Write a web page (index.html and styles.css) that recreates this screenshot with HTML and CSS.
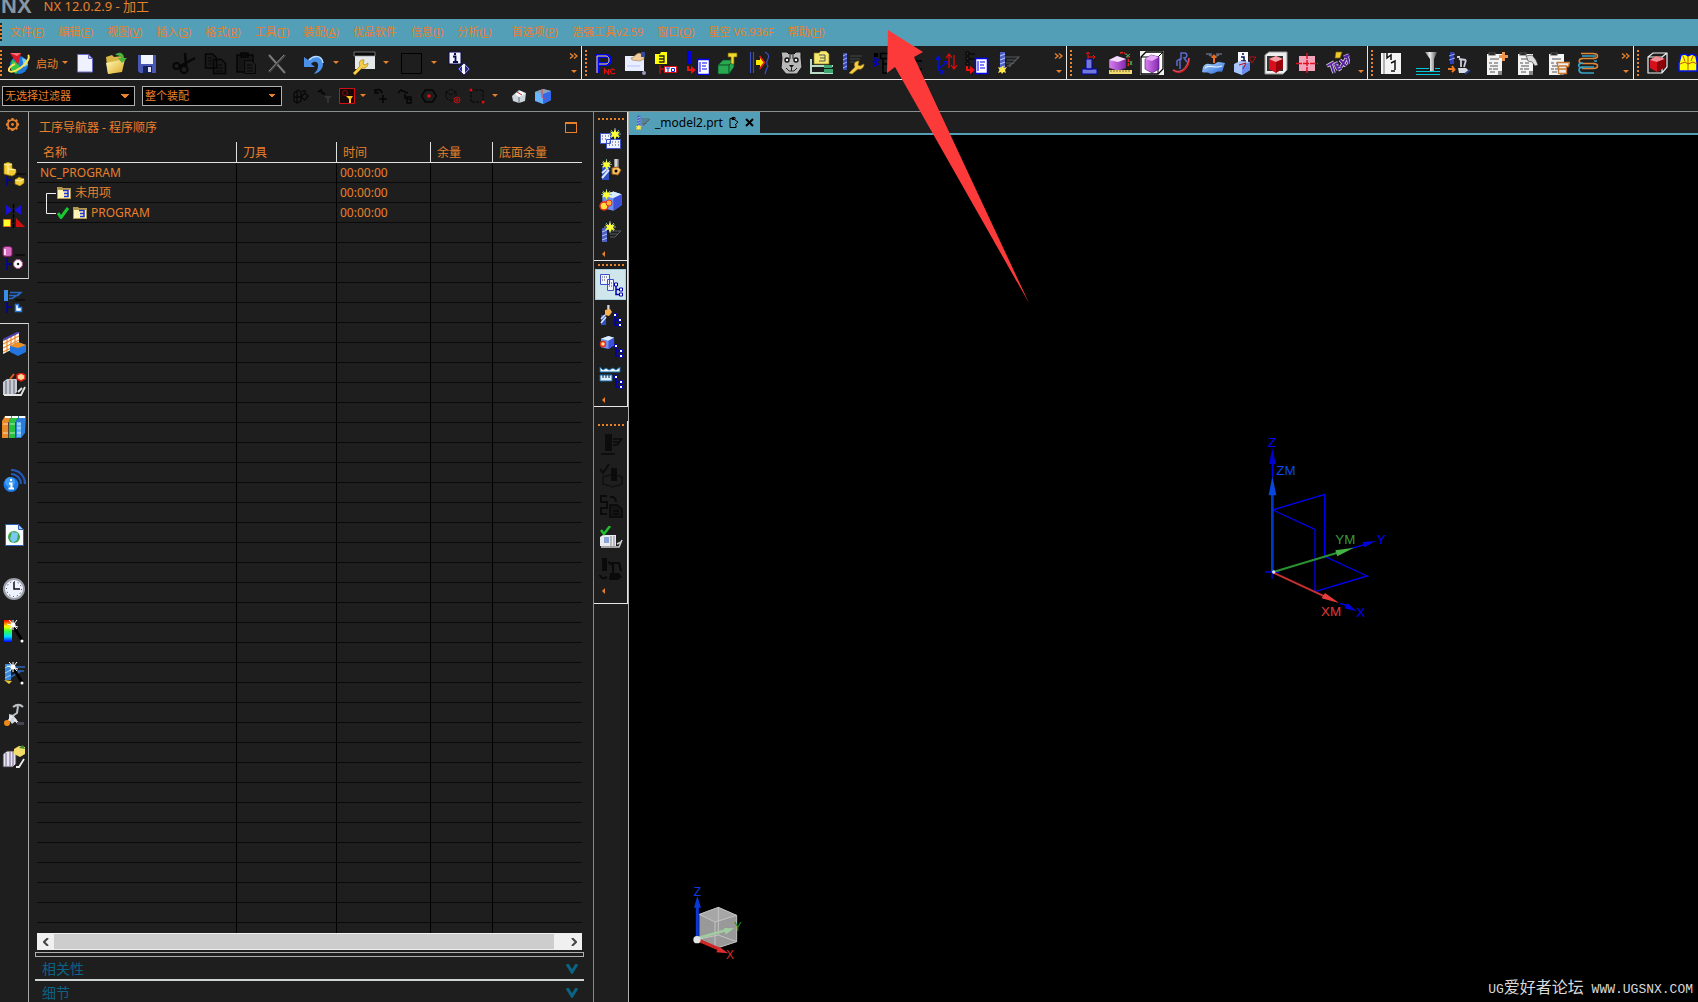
FILE: index.html
```html
<!DOCTYPE html>
<html lang="zh-CN">
  <head>
    <meta charset="UTF-8" />
    <meta name="viewport" content="width=device-width, initial-scale=1.0" />
    <title>NX 12.0.2.9 - 加工</title>
    <link rel="stylesheet" href="styles.css">
  </head>
  <body>
    <!-- icon sprite -->
    <svg class="sprite" aria-hidden="true">
      <defs>
        <linearGradient id="gBlue" x1="0" y1="0" x2="1" y2="1"><stop offset="0" stop-color="#b8e0ff" /><stop offset="1" stop-color="#2060d8" /></linearGradient>
        <linearGradient id="gGold" x1="0" y1="0" x2="1" y2="1"><stop offset="0" stop-color="#fffcc0" /><stop offset="1" stop-color="#dca820" /></linearGradient>
        <linearGradient id="gPurple" x1="0" y1="0" x2="1" y2="0"><stop offset="0" stop-color="#d880f0" /><stop offset="1" stop-color="#8428b0" /></linearGradient>
        <linearGradient id="gSteel" x1="0" y1="0" x2="1" y2="0"><stop offset="0" stop-color="#777" /><stop offset=".4" stop-color="#eee" /><stop offset="1" stop-color="#555" /></linearGradient>
        <linearGradient id="gRain" x1="0" y1="0" x2="0" y2="1"><stop offset="0" stop-color="#f00" /><stop offset=".3" stop-color="#ff0" /><stop offset=".5" stop-color="#3f4" /><stop offset=".75" stop-color="#0df" /><stop offset="1" stop-color="#00f" /></linearGradient>
      </defs>
      <symbol id="star" viewBox="0 0 12 12"><path d="M6 0v12M0 6h12M2 2l8 8M10 2l-8 8" stroke="#7ab0c0" stroke-width="1" /><path d="M6 1l1.300 3.200 3.700-.7-2.200 2.700L11 9l-3.500-.6L6 11.500 4.600 8.500 1 9l2.300-2.700L1 3.500l3.600.7z" fill="#ff3" /></symbol>
      <symbol id="tree" viewBox="0 0 9 14"><path d="M2 2v10h4M2 7h4" stroke="#0000b0" fill="none" stroke-width="1.500" /><path d="M.5.500h3v3h-3zM5.500 5.500h3v3h-3zM5.500 10.500h3v3h-3z" fill="#ffe" stroke="#0000b0" /></symbol>
      <symbol id="drill" viewBox="0 0 24 24"><path d="M9 6h14l-3 3h-9M10 12h8l-7 3M22 7l-9 9" fill="none" stroke="#555b60" stroke-width="1.200" /><path d="M4 1h5v17H4z" fill="#4d5fc4" /><path d="M4 5l5-2M4 9l5-2M4 13l5-2M4 17l5-2" stroke="#b5c0f4" stroke-width="1.200" /><path d="M2 16l3 1 1.500-2L8 17l3-1-2 3 1 3-2.500-1L6 23l-1-2-3 1 1.500-3z" fill="#ffe84a" /></symbol>
      <symbol id="cube-blue" viewBox="0 0 16 16"><path d="M1 4l8-3 6 2v8l-6 4-8-2z" fill="#6f8ff0" /><path d="M1 4l8-3 6 2-6 3z" fill="#dcecff" /><path d="M9 6l6-3v8l-6 4z" fill="#3d50d8" /></symbol>
      <symbol id="doc-list" viewBox="0 0 24 24"><path d="M4 3h15v21H4z" fill="#f4f4f4" /><path d="M6 2h6v2H6zM7 8h9M6 12h3M11 12h4M7 15h8M6 18h3M10 18h5M7 21h5" stroke="#555" stroke-width="1.200" /><path d="M15 20h4v4h-4z" fill="#888" /></symbol>
      <symbol id="folder3" viewBox="0 0 14 13"><path d="M0 1h5l1 1h8v11H0z" fill="#b39a4a" /><path d="M1 4h12v8H1z" fill="#fff6b8" /><path d="M6 4.500h5v6H7M7 7.500h4" fill="none" stroke="#2030d0" stroke-width="1.500" /></symbol>

      <symbol id="launch" viewBox="0 0 24 24"><circle cx="11" cy="14" r="9" fill="#1f78dc" /><path d="M4 9l6 3 2 5-4 6-5-4z" fill="#37c44a" /><path d="M14 7l5 2 1 5-4 2z" fill="#74d4f0" /><path d="M1 20c3 2 10-1 15-6 4-4 6-8 4-10M1 20c-1-3 3-6 6-7" fill="none" stroke="#ffe45a" stroke-width="2" /><path d="M2 2h11l-3 12z" fill="#d81824" /><path d="M2 2h11l-4 3z" fill="#ff7078" /></symbol>
      <symbol id="new" viewBox="0 0 24 24"><path d="M4.500 3.500h11l4 4v13.500h-15z" fill="#f0f1ff" stroke="#6a6cc8" /><path d="M15.500 3.500v4h4z" fill="#b8bcf4" stroke="#6a6cc8" /></symbol>
      <symbol id="open" viewBox="0 0 24 24"><path d="M2 6l6-2 2 2 8-1v15L4 23z" fill="#d9b544" /><path d="M2 12l19-4-3 13L4 23z" fill="url(#gGold)" /><path d="M11 4c4-4 9-2 9 3h3l-5 5-4-5h3c0-2-3-3-6-3z" fill="#48b43c" /></symbol>
      <symbol id="save" viewBox="0 0 24 24"><path d="M3 4h18v18H5l-2-2z" fill="#4858b4" /><path d="M6 4h12v9H6z" fill="#f2f6ff" /><path d="M8 15h9v7H8z" fill="#14225c" /><path d="M13 16h3v5h-3z" fill="#dde" /></symbol>
      <symbol id="cut" viewBox="0 0 24 24"><path d="M13 2l1 13M23 7L8 15" stroke="#070707" stroke-width="2.500" /><circle cx="12" cy="18.500" r="3.500" fill="none" stroke="#070707" stroke-width="2" /><circle cx="4.500" cy="15" r="3" fill="none" stroke="#070707" stroke-width="2" /></symbol>
      <symbol id="copy" viewBox="0 0 24 24"><path d="M2.500 3h7l4 4v10h-11zM10.500 8.500h8l4 4v10h-12z" fill="#1a1a1a" stroke="#060606" stroke-width="1.500" /><path d="M5 7h4M5 10h4M5 13h4M13 14h6M13 17h7M13 20h7" stroke="#060606" /></symbol>
      <symbol id="paste" viewBox="0 0 24 24"><path d="M3 4h16v17H3zM7 2h7v4H7z" fill="#161616" stroke="#060606" stroke-width="1.500" /><path d="M10.500 9.500h7l4 4v9h-11z" fill="#1c1c1c" stroke="#060606" /><path d="M13 14h5M13 17h6M13 20h6" stroke="#060606" /></symbol>
      <symbol id="delete" viewBox="0 0 24 24"><path d="M4 4l16 18" stroke="#7a7a7a" stroke-width="2" /><path d="M20 4L4 21" stroke="#444" stroke-width="2.500" /><path d="M19 4L4 20" stroke="#999" stroke-width=".8" /></symbol>
      <symbol id="undo" viewBox="0 0 24 24"><path d="M2 6v10h11l-4-3c3-4 8-2 7 2 0 4-2 5-4 8 5-1 9-5 9-10 0-8-9-11-15-4z" fill="#4a90e8" /><path d="M7 9c6-6 13-4 14 3" fill="none" stroke="#b8dcff" stroke-width="1.500" /></symbol>
      <symbol id="custom" viewBox="0 0 24 24"><path d="M3 1h20v17H3z" fill="#e4e8ea" /><path d="M2 1h21v4H2z" fill="#0a0a0a" stroke="#999" stroke-width=".7" /><path d="M1 22l7-7c-2-4 1-7 4-6l-1 4 2 1 3-2c0 4-3 6-6 5l-7 7z" fill="#f5cf4c" stroke="#a8800c" stroke-width=".7" /></symbol>
      <symbol id="square" viewBox="0 0 24 24"><path d="M1.500 2.500h20v20h-20z" fill="#1e1e1e" stroke="#000" /></symbol>
      <symbol id="info-cmd" viewBox="0 0 24 24"><path d="M1 1h12v12H1z" fill="#f4f4ff" stroke="#0b0b50" /><path d="M5 5.500h2.500v5M5 11h5M6 3h2" stroke="#0b0b50" stroke-width="1.800" fill="none" /><path d="M16 12l6 6-6 6-6-6z" fill="#f4f4ff" stroke="#26268c" /><path d="M17 14l4 4-4 4zM14 15v6l-3-3z" fill="#26268c" /></symbol>

      <symbol id="pnc" viewBox="0 0 24 24"><path d="M4 22V5h9c5 0 5 8 0 8H6" fill="none" stroke="#00f" stroke-width="4" /><path d="M4 22V5h9c4 0 4 8 0 8H6" fill="none" stroke="#ffe83c" stroke-width="1" /><path d="M11.500 23v-5l4 5v-5M22 19c-4-2-5 0-4 3 1 1 3 1 4 0" fill="none" stroke="#e01010" stroke-width="1.200" /></symbol>
      <symbol id="note" viewBox="0 0 24 24"><path d="M1 5h19v15H1z" fill="#e8eeff" /><path d="M3 15h13" stroke="#b9c4ee" /><path d="M7 7c3 0 4-4 8-5l5 2v4l-4 2-8-1z" fill="#f0cc9c" stroke="#9a7850" stroke-width=".6" /><path d="M17 1h4v5h-4z" fill="#34489c" /><circle cx="20" cy="22" r="2" fill="#99b" /></symbol>
      <symbol id="tofolder" viewBox="0 0 24 24"><path d="M0 3h5l1-2h6v12H0z" fill="#ff0" /><path d="M4 5h5v6H4M4 8h5" fill="none" stroke="#222" stroke-width="1.300" /><path d="M5 14v9M5 18h5" stroke="#e01010" /><path d="M9.500 15.500h12v6h-12z" fill="#fff" stroke="#e01010" /><path d="M11 17h4M13 17v4M16.500 17.500h3v3h-3z" stroke="#22c" fill="none" /></symbol>
      <symbol id="tolist" viewBox="0 0 24 24"><path d="M3 0v13" stroke="#0000e0" stroke-width="4" /><path d="M2 15v4h5" fill="none" stroke="#f01010" stroke-width="2" /><path d="M5 15l5 4-5 4z" fill="#f01010" /><path d="M11.500 8.500h12v15h-12z" fill="#fff" stroke="#00f" stroke-width="1.500" /><path d="M14 11v10M16 12h5M16 15h4M16 18h5" stroke="#00f" /></symbol>
      <symbol id="block" viewBox="0 0 24 24"><path d="M1 14l5-5h11v7l-5 7H1z" fill="#28a850" stroke="#042" stroke-width=".6" /><path d="M1 14h11l5-5M12 14v9" stroke="#0b4a20" fill="none" /><path d="M11 2h9v4h-3v7h-3V6h-3z" fill="#f0d828" stroke="#6a5a08" stroke-width=".7" /></symbol>
      <symbol id="mirror" viewBox="0 0 24 24"><path d="M2.500 1v21M5.500 1v21M17 1c9 5-2 9 3 14-1 2-2 4-3 8" fill="none" stroke="#3b50c0" stroke-width="1.200" /><path d="M8 9h4V5l5 6.500-5 6.500v-4H8z" fill="#ffe800" /><path d="M11.500 5l5 6.500-5 6.500" fill="none" stroke="#e01010" stroke-width="1.500" /></symbol>
      <symbol id="bear" viewBox="0 0 24 24"><path d="M2 1h6l2 2h5l2-2h5v6l1 9-5 7H7l-5-6 1-10z" fill="#b8b8b8" stroke="#111" /><path d="M10 14h5l-2.500 3z" fill="#111" /><circle cx="8" cy="9" r="2" fill="#eee" stroke="#111" stroke-width="1.400" /><circle cx="17" cy="9" r="2" fill="#eee" stroke="#111" stroke-width="1.400" /><path d="M7 17l3 3h5l3-3M12.500 17v3M11 4v4M14 4v4" fill="none" stroke="#222" /></symbol>
      <symbol id="ftree" viewBox="0 0 24 24"><path d="M4 2h5l2-2h5l3 3v10H4z" fill="#f4e870" stroke="#8a7a20" stroke-width=".7" /><path d="M9 4h6v6H9M10 7h5" fill="none" stroke="#555" /><path d="M1 8v15M1 15h22M1 22h22" fill="none" stroke="#b8dcc8" stroke-width="2" /><path d="M14 14h8v3h-8zM14 18h9v4h-9z" fill="#3aa870" /></symbol>
      <symbol id="dwrench" viewBox="0 0 24 24"><path d="M9 5h12M9 8h10M9 11h6" stroke="#45494c" /><path d="M2 2h4v17H2z" fill="#3b49b4" /><path d="M2 5l4-2M2 9l4-2M2 13l4-2M2 17l4-2" stroke="#aab4f4" /><path d="M8 22l6-6c-2-4 1-6 4-6l-1 4 2 1 4-2c0 4-3 6-6 5l-6 5z" fill="#f4cc48" stroke="#a07808" stroke-width=".6" /></symbol>
      <symbol id="otree" viewBox="0 0 24 24"><path d="M2 2h4v4H2z" fill="#000" /><path d="M2 7l4 2-4 2 4 2-4 2" fill="none" stroke="#00c" stroke-width="1.500" /><path d="M8.500 2.500h14v5h-14zM11 8v14h4M11 13h4" fill="none" stroke="#000" stroke-width="1.500" /></symbol>
      <symbol id="otree2" viewBox="0 0 24 24"><path d="M3 3l4 5" stroke="#00c" stroke-width="2" /><path d="M10 9h3v3h-3zM10 17h3v3h-3zM14 10h5M14 18h5" fill="none" stroke="#000" stroke-width="1.500" /></symbol>
      <symbol id="axes" viewBox="0 0 24 24"><path d="M4 20V7M4 18l8-6M6 19l4 4M10 19l-4 4" stroke="#0010d8" stroke-width="1.500" fill="none" /><path d="M1 9l3-5 3 5zM9 10h5v4z" fill="#0010d8" /><path d="M15 17V4M12 7l3-4 3 4M20 4v13M17 14l3 4 3-4" fill="none" stroke="#e80c0c" stroke-width="1.200" /></symbol>
      <symbol id="list2" viewBox="0 0 24 24"><path d="M3 3h7M3 8h7" stroke="#000" /><path d="M1 1h3v3H1zM1 6h3v3H1zM1 11h3v3H1z" fill="#333" stroke="#000" /><path d="M2 15v4h5" fill="none" stroke="#f01010" stroke-width="2" /><path d="M5 15l5 4-5 4z" fill="#f01010" /><path d="M10.500 7.500h12v15h-12z" fill="#fff" stroke="#00f" stroke-width="1.500" /><path d="M13 10v10M15 11h5M15 14h4M15 17h5" stroke="#00f" /></symbol>

      <symbol id="stand" viewBox="0 0 24 24"><path d="M8 8h6v10H8zM4 18h15v5H4z" fill="#7078d8" stroke="#0000a8" /><path d="M10 8V1M8 3l2-2 2 2M10 6h7M15 4l2 2-2 2" stroke="#e81414" fill="none" /></symbol>
      <symbol id="measure" viewBox="0 0 24 24"><path d="M0 9l8-4 9 3v9l-8 3-9-3z" fill="url(#gPurple)" stroke="#333" stroke-width=".5" /><path d="M0 9l8-4 9 3-8 3z" fill="#f4dcfc" /><path d="M0 19h23v4H0z" fill="#f0d870" /><path d="M2 19v2M5 19v2M8 19v2M11 19v2M14 19v2M17 19v2M20 19v2" stroke="#83702a" /><path d="M11 2c6-2 10 4 8 14" fill="none" stroke="#f02020" stroke-width="1.500" stroke-dasharray="3 1" /><path d="M17 3l4 3M21 3l-4 3M21 10l2 4M23 10l-2 4" stroke="#4ab060" /></symbol>
      <symbol id="bbox" viewBox="0 0 24 24"><path d="M0 0h24v24H0z" fill="#eee" /><path d="M1 6l5-5h17v17l-5 5H1z" fill="#fff" stroke="#000" stroke-width="1.300" /><path d="M1 6h17v17M18 6l5-5" stroke="#000" fill="none" /><path d="M5 8l6-4 8 2v12l-7 4-7-4z" fill="url(#gPurple)" stroke="#400868" stroke-width=".6" /><path d="M5 8l6-4 8 2-7 4z" fill="#e8a8fc" /></symbol>
      <symbol id="curve" viewBox="0 0 24 24"><path d="M2 19c8 6 16-2 16-12" fill="none" stroke="#d01c28" stroke-width="2" /><path d="M2 19c8 4 14-2 16-12" fill="none" stroke="#ff9090" stroke-width=".6" /><path d="M9 18V8l-3 2v5M10 9V2h4c3 1 2 5-1 5l3 4" fill="none" stroke="#5c6ad0" stroke-width="1.500" /></symbol>
      <symbol id="surface" viewBox="0 0 24 24"><path d="M1 16c4-7 8 0 13-4 3-2 6 0 9 0l-3 9c-6-2-9 4-13 1-2-1-5 0-7-1z" fill="url(#gBlue)" /><path d="M3 17c5-4 9 1 17-2" stroke="#fff" fill="none" /><path d="M4 3h6M14 3h6M7 4l5 2 5-2" stroke="#667" fill="none" stroke-width="1.500" /><path d="M11 12V7H9l3-4 3 4h-2v5z" fill="#f06c1c" /></symbol>
      <symbol id="infobox" viewBox="0 0 24 24"><path d="M5 1h10v11H5z" fill="#f8f8ff" /><path d="M9 3h2M8 6h3v4M8 10h5" stroke="#0b0b50" stroke-width="1.500" fill="none" /><path d="M1 13l6-3 10 1v8l-8 5-8-3z" fill="#a8c4ff" /><path d="M9 15l8-4v8l-8 5z" fill="#6a8cf0" /><path d="M6 14l7-2-3 6M16 6h7l-4 6z" fill="none" stroke="#b01018" /></symbol>
      <symbol id="redcube" viewBox="0 0 24 24"><path d="M1 4l4-3h18v18l-4 4H1z" fill="#eee" stroke="#999" /><path d="M3 5h16v15H3z" fill="#333" /><path d="M5 8l7-3 7 3v9l-7 5-7-4z" fill="#d8101c" /><path d="M5 8l7-3 7 3-7 3z" fill="#f4a4a8" /><path d="M12 11l7-3v9l-7 5z" fill="#98040c" /></symbol>
      <symbol id="pink" viewBox="0 0 24 24"><path d="M4 5h16v15H4z" fill="#f4a4ba" /><path d="M12 2v21M1 12.500h22" stroke="#e01020" stroke-width="1.500" stroke-dasharray="6 1" /></symbol>
      <symbol id="textart" viewBox="0 0 24 24"><path d="M10 1h6l-2 6H9z" fill="#f0c828" stroke="#7c6404" stroke-width=".6" /><path d="M1 15l7-4M5 13l3 9M9 13l3 6M9 13l3-1M11 16l2-1M12 19l3-2M14 9l6 6M20 8l-5 8M18 6l5-2M21 5l2 8" stroke="#ddd" stroke-width="3.500" /><path d="M1 15l7-4M5 13l3 9M9 13l3 6M9 13l3-1M11 16l2-1M12 19l3-2M14 9l6 6M20 8l-5 8M18 6l5-2M21 5l2 8" stroke="#5a20a8" stroke-width="2" /></symbol>

      <symbol id="notebook" viewBox="0 0 24 24"><path d="M2 2h20v21H2z" fill="#f4f4f4" /><path d="M5 2v21" stroke="#777" /><path d="M8 2v5l4-3v5M12 12l4-2v9M12 20h4" fill="none" stroke="#111" stroke-width="1.500" /></symbol>
      <symbol id="lathe" viewBox="0 0 24 24"><path d="M9 1h12l-3 7v13h-4V8z" fill="url(#gSteel)" /><path d="M0 17.500h13M0 20.500h24M0 23.500h24M19 17.500h5" stroke="#00c8d8" stroke-width="1.200" /></symbol>
      <symbol id="robot" viewBox="0 0 24 24"><path d="M3 1h4v12H3z" fill="#3040b8" /><path d="M2 5l6-2M2 9l6-2" stroke="#9aa4f0" /><path d="M10 6h3M12 8l7 1M14 8v8M19 9l-2 7" fill="none" stroke="#ccd" stroke-width="1.800" /><path d="M1 18h6l-2-3M5 21l3-3" stroke="#f07820" fill="none" stroke-width="2" /><path d="M11 17h8l3 3-4 2h-6z" fill="#d8dce0" /><path d="M18 23l5-4" stroke="#28409c" stroke-width="2" /></symbol>
      <symbol id="docadd" viewBox="0 0 24 24"><use href="#doc-list" width="24" height="24" x="-1" /><path d="M15 5.500h9M19.500 1v9" stroke="#f0944c" stroke-width="3" /></symbol>
      <symbol id="dochand" viewBox="0 0 24 24"><use href="#doc-list" width="24" height="24" x="-1" /><path d="M11 5l6-1 4 5 2 5-3 1-3-4-4-1-1-3z" fill="#ddd" stroke="#333" stroke-width=".6" /></symbol>
      <symbol id="docstack" viewBox="0 0 24 24"><use href="#doc-list" width="24" height="24" x="-1" /><path d="M11.500 11.500h12l-1 4h-2v7h-8v-7h-1zM13 15h8M13 18h7" fill="#eee" stroke="#c87830" stroke-width="1.300" /></symbol>
      <symbol id="coil" viewBox="0 0 24 24"><path d="M4 2.500h12c6 0 6 5 0 5M16 12.500c6 0 6 5 0 5H5" fill="none" stroke="#e08838" stroke-width="1.600" /><path d="M17 7.500H6c-5 0-5 5 0 5h11" fill="none" stroke="#e08838" stroke-width="1.600" /><path d="M5 5h14M17 10h3M6 12c-6 0-6 5 1 5M17 16H5c-4 1-4 5 0 6h12" fill="none" stroke="#38a4c8" stroke-width="1.600" /></symbol>
      <symbol id="wirecube" viewBox="0 0 24 24"><path d="M3 6l5-4h14v14l-5 6H3zM3 6h14v16M17 6l5-4" fill="none" stroke="#eee" stroke-width="1.200" /><path d="M5 9l6-4 9 3v8l-8 5-7-4z" fill="#d4101c" /><path d="M5 9l6-4 9 3-8 3z" fill="#f08c94" /><path d="M12 11l8-3v8l-8 5z" fill="#8c040a" /></symbol>
      <symbol id="yellowmap" viewBox="0 0 24 24"><path d="M5 4l4-1 3 2 4-2 4 2 1 6v9H3v-8z" fill="#ff0" stroke="#0010f0" stroke-width="1.500" /><path d="M12 5v14M4 13l5-2 3 2 5-2 4 2M7 5l2 5M17 5l-2 5" stroke="#c05010" fill="none" /></symbol>

      <!-- selection bar -->
      <symbol id="s-asm" viewBox="0 0 16 16"><path d="M1 5l4-3 3 2v9l-4 2-3-2zM1 9h7M4 3v12M9 3h4M9 8l3-3 3 3-3 4-3-2z" fill="none" stroke="#080808" stroke-width="1.300" /></symbol>
      <symbol id="s-fil" viewBox="0 0 16 16"><path d="M1 4l3-2 1 3 3 1" stroke="#080808" fill="none" stroke-width="2" /><path d="M7 8h8l-3 3v4h-2v-4z" fill="#333" /></symbol>
      <symbol id="s-red" viewBox="0 0 16 16"><path d="M.5.500h15v15H.5z" fill="#1a0808" stroke="#d01018" /><circle cx="6" cy="5" r="2.500" fill="none" stroke="#7a1014" /><path d="M7 8h7l-2 3v4h-2v-4z" fill="#f8c020" /></symbol>
      <symbol id="s-rot" viewBox="0 0 16 16"><path d="M2 5c1-5 6-4 7 0M2 1v4h4M10 7v8M6 11h8" fill="none" stroke="#060606" stroke-width="1.600" /></symbol>
      <symbol id="s-arr" viewBox="0 0 16 16"><path d="M1 5l3-3 4 2 3 1M8 6v4l6 2M10 9h4v6h-4z" fill="none" stroke="#060606" stroke-width="1.600" /></symbol>
      <symbol id="s-hex" viewBox="0 0 16 16"><path d="M4.500 2h7l4 6-4 6h-7l-4-6z" fill="none" stroke="#050505" stroke-width="1.500" /><circle cx="8" cy="8" r="1.800" fill="#e01010" /></symbol>
      <symbol id="s-box" viewBox="0 0 16 16"><path d="M1 4l5-3 5 3v6l-5 3-5-3zM1 4l5 3 5-3" fill="none" stroke="#050505" stroke-dasharray="2 1" /><circle cx="12" cy="12" r="3" fill="none" stroke="#b81014" /><path d="M10 12h4M12 10v4" stroke="#b81014" /></symbol>
      <symbol id="s-rect" viewBox="0 0 16 16"><path d="M2 2h12v12H2z" fill="none" stroke="#050505" stroke-dasharray="3 1" /><circle cx="2" cy="2" r="1.500" fill="#e01010" /><circle cx="14" cy="14" r="1.500" fill="#e01010" /></symbol>
      <symbol id="s-view" viewBox="0 0 16 16"><path d="M1 8l7-6 7 3-1 8-6 2-6-2z" fill="#ccd4dc" /><path d="M4 6l6-3 4 3-6 3z" fill="#fff" /><path d="M6 4l5 3" stroke="#d02020" /><path d="M8 9v6" stroke="#667" /></symbol>
      <symbol id="s-shade" viewBox="0 0 16 16"><path d="M0 4l8-3 8 2v9l-8 4-8-3z" fill="#68b4ff" /><path d="M0 4l8-3 8 2-8 3z" fill="#8fa0ae" /><path d="M8 6l8-3v9l-8 4z" fill="#3268e8" /><path d="M7 1v8l3 2" stroke="#d84048" fill="none" /></symbol>

      <!-- resource bar -->
      <symbol id="gear" viewBox="0 0 16 16"><circle cx="8" cy="8" r="5" fill="none" stroke="#e8802c" stroke-width="2" /><path d="M8 1v2M8 13v2M1 8h2M13 8h2M3 3l1.500 1.500M11.500 11.500L13 13M13 3l-1.500 1.500M4.500 11.500L3 13" stroke="#e8802c" stroke-width="2.500" /><circle cx="8" cy="8" r="1.500" fill="#e8802c" /></symbol>
      <symbol id="r-asm" viewBox="0 0 24 24"><path d="M2 2l4-2 4 2v4l4 2v4l-4 2-8-2z" fill="#f4cc38" stroke="#9a7404" stroke-width=".7" /><path d="M2 2l4 1 4-1M6 3v9M6 7l8 1" stroke="#fff8b0" fill="none" /><path d="M13 12h11" stroke="#000" /><path d="M5 14v10M5 18h5" stroke="#0000a0" stroke-width="1.500" /><path d="M13 18l4-3 5 2v4l-4 3-5-2z" fill="#f4cc38" stroke="#9a7404" stroke-width=".7" /><path d="M13 18l5 1 4-2" stroke="#fff8b0" fill="none" /></symbol>
      <symbol id="r-con" viewBox="0 0 24 24"><path d="M4 1l7 5-7 5zM19 1l-7 5 7 5z" fill="#1a12d0" /><path d="M11.500 0v24" stroke="#000" stroke-dasharray="4 1" stroke-width="1.500" /><path d="M1.500 15.500h7v7h-7z" fill="#ff2" stroke="#e07820" /><path d="M14 14l9 9h-9z" fill="#d01010" /></symbol>
      <symbol id="r-part" viewBox="0 0 24 24"><path d="M1 2c0-2 9-2 9 0v7c0 2-9 2-9 0z" fill="#d86cc0" stroke="#801868" /><path d="M3 3v6" stroke="#ffd8f4" stroke-width="2" /><path d="M13 9h10" stroke="#000" /><path d="M5 12v12M5 18h5" stroke="#0000a0" stroke-width="1.500" /><circle cx="16" cy="18" r="3" fill="none" stroke="#fff" stroke-width="3.500" /><circle cx="16" cy="18" r="4.500" fill="none" stroke="#b04890" stroke-width="1" /></symbol>
      <symbol id="r-op" viewBox="0 0 24 24"><path d="M2 1h4v11H2z" fill="#3a8ee8" /><path d="M8 3.500h11l-3 3H7M7 9.500h3l8-5" fill="none" stroke="#2468c0" stroke-width="1.500" /><path d="M13 11h10" stroke="#000" /><path d="M5 13v11M5 18h5" stroke="#0000a0" stroke-width="1.500" /><path d="M13.500 15.500h3v3h3v4h-6z" fill="#fff" stroke="#2878d8" stroke-width="1.500" /></symbol>
      <symbol id="r-mach" viewBox="0 0 24 24"><path d="M1 8l16-8v14L1 22z" fill="#fff4e0" /><path d="M1 12l16-8M1 16l16-8M1 20l16-8M5 6v14M9 4v14M13 2v14" stroke="#e87818" /><path d="M1 8l16-8" stroke="#5040b0" stroke-width="2" /><path d="M8 14l8-4 8 3v7l-8 4-8-4z" fill="#2474e0" /><path d="M8 14l8-4 8 3-8 3z" fill="#f09020" /></symbol>
      <symbol id="r-sim" viewBox="0 0 24 24"><path d="M1 9l4-3h10v13l-3 3H1z" fill="#c8ccd4" /><path d="M4 8v13M8 7v14M12 7v14" stroke="#667" /><path d="M2 22h17l4-8M16 19l4-4" stroke="#e4e4e4" stroke-width="1.800" fill="none" /><path d="M8 6l4-5" stroke="#e86018" stroke-width="2" /><path d="M15 2l4-2 4 2v4l-4 2-4-2z" fill="#ffd8a0" stroke="#e02010" stroke-width="1.500" /></symbol>
      <symbol id="r-books" viewBox="0 0 24 24"><path d="M0 6l3-5h7l-3 5v17H0z" fill="#e88a28" /><path d="M7 6l3-5h7l-3 5v17H7z" fill="#28c040" /><path d="M14 6l3-5h7l-1 17-4 5h-5z" fill="#2c7cd8" /><path d="M15 7h4v15h-4z" fill="#60b8f8" /><path d="M3 2h6M10 2h6M17 2h6" stroke="#fff" stroke-width="2" /><path d="M1 9h5M1 18h5M8 9h5M8 18h5M15 9h4M15 13h4M15 18h4" stroke="#fff" opacity=".7" /><path d="M6.500 7v16M13.500 7v16" stroke="#543" /></symbol>
      <symbol id="r-web" viewBox="0 0 24 24"><circle cx="9" cy="15.500" r="7.500" fill="#1a7ae8" /><circle cx="8" cy="13" r="5" fill="#5ab4ff" opacity=".6" /><path d="M7 14.500h2.500v5M6.500 19.500h5.500M8 11h2" stroke="#fff" stroke-width="2" fill="none" /><path d="M9 5c6 0 10 5 10 10M9 1c8 0 14 6 14 14" stroke="#2458b8" stroke-width="2.200" fill="none" /></symbol>
      <symbol id="r-page" viewBox="0 0 24 24"><path d="M3.500 1.500h13l5 5v16h-18z" fill="#f8fbff" stroke="#3060b0" /><path d="M16.500 1.500v5h5z" fill="#a8c8f0" stroke="#3060b0" /><circle cx="12" cy="14" r="6" fill="#3ba848" /><path d="M10 9l6 1-1 7-4 3-3-4z" fill="#7cc8f0" /></symbol>
      <symbol id="r-clock" viewBox="0 0 24 24"><circle cx="12" cy="12" r="10" fill="#eef3ff" stroke="#9a9ea8" stroke-width="2" /><path d="M12 5v7h6" stroke="#111" stroke-width="1.500" fill="none" /><circle cx="12" cy="12" r="7.500" fill="none" stroke="#223" stroke-dasharray="1 2.900" /></symbol>
      <symbol id="wand" viewBox="0 0 24 24"><path d="M11 7l9 14" stroke="#000" stroke-width="3" /><circle cx="20" cy="22" r="1.500" fill="#fff" /><path d="M11 1v10M5 5l11 3M7 1l8 9M15 1L8 10" stroke="#fff" stroke-width="1" /><circle cx="11" cy="6" r="2.500" fill="#fff" /></symbol>
      <symbol id="r-color" viewBox="0 0 24 24"><path d="M2 1h8v22H2z" fill="url(#gRain)" /><use href="#wand" width="24" height="24" /></symbol>
      <symbol id="r-dwand" viewBox="0 0 24 24"><path d="M3 3h6v16H3z" fill="#3a88d8" /><path d="M3 7l6-3M3 12l6-3M3 17l6-3" stroke="#a0d0ff" /><path d="M10 6h13M11 10h11M9 16l10-6" stroke="#2c68b8" stroke-width="1.500" /><path d="M2 19l8 1-3 3z" fill="#e8c838" /><use href="#wand" width="24" height="24" /></symbol>
      <symbol id="r-fix" viewBox="0 0 24 24"><path d="M11 4c4-3 7-3 10 0M16 3l-1 7-6 4" stroke="#bbc0c4" stroke-width="2" fill="none" /><path d="M7 11l4 1 4 5-5 4-3-4z" fill="#cfd4da" /><path d="M10 13l-5 7M12 16l5 5" stroke="#e8ecf0" stroke-width="2" fill="none" /><circle cx="5" cy="20" r="3" fill="#f08818" /><path d="M15 20.500h7" stroke="#445" stroke-width="3" /></symbol>
      <symbol id="r-mfold" viewBox="0 0 24 24"><path d="M1 9l4-3h9v13l-3 3H1z" fill="#e8e4f0" stroke="#333" /><path d="M4 8v13M8 7v14M11 7v14" stroke="#746890" /><path d="M14 22h3l5-8" stroke="#eee" stroke-width="1.800" fill="none" /><path d="M12 4l5-3 6 1v7l-5 3-6-3z" fill="#f4dc68" /><path d="M17 3l4-3 2 4" fill="#389030" /></symbol>

      <!-- vertical palettes -->
      <symbol id="v-prog" viewBox="0 0 24 24"><path d="M1.500 6.500h10v10h-10zM7.500 12.500h14v9h-14z" fill="#f0f2ff" stroke="#3c50c8" /><path d="M3 9h7M3 12h4M10 15h10M10 18h10" stroke="#445" stroke-dasharray="1 2" /><use href="#star" x="10" y="1" width="12" height="12" /></symbol>
      <symbol id="v-tool" viewBox="0 0 24 24"><path d="M3 9h7v13H3z" fill="#2f50c0" /><path d="M3 20l7-8M3 15l6-5" stroke="#dce8ff" stroke-width="2" /><path d="M15 1h5v9h-5z" fill="url(#gSteel)" /><path d="M13 10l6-1 3 3-3 5-6-1z" fill="#f8c060" stroke="#a06010" /><circle cx="17" cy="13" r="1.500" fill="#000" /><use href="#star" x="2" y="1" width="11" height="11" /></symbol>
      <symbol id="v-geo" viewBox="0 0 24 24"><use href="#cube-blue" x="2" y="1" width="22" height="22" /><circle cx="5" cy="17" r="4" fill="#ffe040" stroke="#e83018" stroke-width="1.500" /><circle cx="10" cy="14" r="3" fill="#ffb040" stroke="#e83018" /><use href="#star" x="2" y="0" width="11" height="11" /></symbol>
      <symbol id="v-opn" viewBox="0 0 24 24"><path d="M11 11h11l-3 3h-8M11 17h5l5-5" fill="none" stroke="#555b60" /><path d="M3 8h5v14H3z" fill="#4d5fc4" /><path d="M3 12l5-2M3 16l5-2M3 20l5-2" stroke="#b5c0f4" /><use href="#star" x="5" y="1" width="12" height="12" /></symbol>
      <symbol id="v-prog2" viewBox="0 0 24 24"><path d="M1.500 1.500h9v10h-9zM8.500 6.500h6v11h-6z" fill="#f0f2ff" stroke="#3c50c8" /><path d="M3 4h6M3 7h4M10 10h4M10 13h4" stroke="#445" stroke-dasharray="1 1" /><use href="#tree" x="15" y="9" width="9" height="15" /></symbol>
      <symbol id="v-tool2" viewBox="0 0 24 24"><path d="M8 1h3v6H8z" fill="url(#gSteel)" /><path d="M6 6l5-1 2 3-3 4-4-1z" fill="#f8b050" /><path d="M2 11h5v10H2z" fill="#2f50c0" /><path d="M2 19l5-6M2 15l4-4" stroke="#dce8ff" stroke-width="1.500" /><use href="#tree" x="14" y="9" width="9" height="14" /></symbol>
      <symbol id="v-geo2" viewBox="0 0 24 24"><use href="#cube-blue" x="1" y="0" width="15" height="15" /><circle cx="4" cy="9" r="2.500" fill="#ffe0a0" stroke="#e83018" stroke-width="1.500" /><use href="#tree" x="15" y="9" width="9" height="14" /></symbol>
      <symbol id="v-meth" viewBox="0 0 24 24"><path d="M1 1v5h20V1l-4 3-3-2-4 2-3-2-3 2z" fill="#f0f8ff" stroke="#1468a8" /><path d="M1 9h12v6H1z" fill="#dceeff" stroke="#1468a8" /><path d="M4 9v3M7 9v3M10 9v3" stroke="#024" /><use href="#tree" x="15" y="9" width="9" height="14" /></symbol>
      <symbol id="v-gen" viewBox="0 0 24 24"><path d="M6 1h7v17H6z" fill="#0c0c0c" /><path d="M2 21h14M14 6h9l-3 3h-6M14 12h4l4-5" fill="none" stroke="#0a0a0a" stroke-width="1.500" /></symbol>
      <symbol id="v-ver" viewBox="0 0 24 24"><path d="M1 5l3 4 6-9" fill="none" stroke="#0c0c0c" stroke-width="2" /><path d="M4 13l10-3 9 3v7l-9 3-10-3z" fill="none" stroke="#111" stroke-width="1.500" /><path d="M12 4h6v13h-6z" fill="#0b0b0b" /></symbol>
      <symbol id="v-post" viewBox="0 0 24 24"><path d="M8 1H2v6h6v6H2v6h6M11 2c4-1 6 2 6 5" fill="none" stroke="#0b0b0b" stroke-width="2" /><path d="M11 10h7l5 4v8H11z" fill="#151515" stroke="#080808" stroke-width="1.500" /><path d="M14 16h6M14 19h6" stroke="#000" /></symbol>
      <symbol id="v-mach" viewBox="0 0 24 24"><path d="M1 11l3-2h13v11H1z" fill="#e8eaf0" /><path d="M5 11h5v6H5z" fill="#8aa4d8" /><path d="M12 10v10M15 10v10" stroke="#888" /><path d="M2 21h18l3-7M18 18l4-2" stroke="#ccc" stroke-width="1.500" fill="none" /><path d="M2 4l3 4 6-8" stroke="#20c030" stroke-width="2.500" fill="none" /></symbol>
      <symbol id="v-shop" viewBox="0 0 24 24"><path d="M3 1h5v13H3zM11 16h9l3 4-4 3h-9z" fill="#0a0a0a" /><path d="M9 5l5 3M12 6h8l2 8M14 7v9M1 18c1 4 4 4 7 2" fill="none" stroke="#0a0a0a" stroke-width="2.200" /></symbol>
    </svg>

    <header class="titlebar">
      <span class="logo">NX</span>
      <h1>NX 12.0.2.9 - 加工</h1>
    </header>

    <nav class="menubar">
      <span class="grip"></span>
      <a href="#">文件(<u>F</u>)</a>
      <a href="#">编辑(<u>E</u>)</a>
      <a href="#">视图(<u>V</u>)</a>
      <a href="#">插入(<u>S</u>)</a>
      <a href="#">格式(<u>R</u>)</a>
      <a href="#">工具(<u>T</u>)</a>
      <a href="#">装配(<u>A</u>)</a>
      <a href="#">优品软件</a>
      <a href="#">信息(<u>I</u>)</a>
      <a href="#">分析(<u>L</u>)</a>
      <a href="#" class="gap">首选项(<u>P</u>)</a>
      <a href="#">浩强工具v2.59</a>
      <a href="#">窗口(<u>O</u>)</a>
      <a href="#">星空 V6.936F</a>
      <a href="#">帮助(<u>H</u>)</a>
    </nav>

    <div class="toolbars">
      <div class="toolbar standard">
        <span class="grip"></span>
        <button class="start"><svg class="icon"><use href="#launch" /></svg>启动<i class="caret"></i></button>
        <button class="tool" aria-label="新建"><svg class="icon"><use href="#new" /></svg></button>
        <button class="tool" aria-label="打开"><svg class="icon"><use href="#open" /></svg></button>
        <button class="tool" aria-label="保存"><svg class="icon"><use href="#save" /></svg></button>
        <button class="tool gap" aria-label="剪切"><svg class="icon"><use href="#cut" /></svg></button>
        <button class="tool" aria-label="复制"><svg class="icon"><use href="#copy" /></svg></button>
        <button class="tool" aria-label="粘贴"><svg class="icon"><use href="#paste" /></svg></button>
        <button class="tool" aria-label="删除"><svg class="icon"><use href="#delete" /></svg></button>
        <button class="tool gap" aria-label="撤消"><svg class="icon"><use href="#undo" /></svg></button>
        <button class="drop" aria-label="撤消列表"><i class="caret"></i></button>
        <button class="tool gap" aria-label="定制"><svg class="icon"><use href="#custom" /></svg></button>
        <button class="drop" aria-label="定制列表"><i class="caret"></i></button>
        <button class="tool gap-s" aria-label="窗口"><svg class="icon"><use href="#square" /></svg></button>
        <button class="drop" aria-label="窗口列表"><i class="caret"></i></button>
        <button class="tool gap-s" aria-label="信息"><svg class="icon"><use href="#info-cmd" /></svg></button>
        <button class="more" aria-label="更多"><svg class="chev" viewBox="0 0 9 6"><path d="M1 .5l3 2.500-3 2.500M5 .5l3 2.500-3 2.500" /></svg><i class="caret"></i></button>
      </div>
      <div class="toolbar nc">
        <span class="grip"></span>
        <button class="tool" aria-label="NC 程序"><svg class="icon"><use href="#pnc" /></svg></button>
        <button class="tool" aria-label="便笺"><svg class="icon"><use href="#note" /></svg></button>
        <button class="tool" aria-label="程序组"><svg class="icon"><use href="#tofolder" /></svg></button>
        <button class="tool" aria-label="刀具清单"><svg class="icon"><use href="#tolist" /></svg></button>
        <button class="tool" aria-label="毛坯"><svg class="icon"><use href="#block" /></svg></button>
        <button class="tool" aria-label="镜像"><svg class="icon"><use href="#mirror" /></svg></button>
        <button class="tool" aria-label="工具箱"><svg class="icon"><use href="#bear" /></svg></button>
        <button class="tool" aria-label="程序树"><svg class="icon"><use href="#ftree" /></svg></button>
        <button class="tool" aria-label="刀具设置"><svg class="icon"><use href="#dwrench" /></svg></button>
        <button class="tool" aria-label="工序树"><svg class="icon"><use href="#otree" /></svg></button>
        <button class="tool" aria-label="工序分支"><svg class="icon"><use href="#otree2" /></svg></button>
        <button class="tool" aria-label="坐标系"><svg class="icon"><use href="#axes" /></svg></button>
        <button class="tool" aria-label="输出清单"><svg class="icon"><use href="#list2" /></svg></button>
        <button class="tool" aria-label="铣刀"><svg class="icon"><use href="#drill" /></svg></button>
        <button class="more" aria-label="更多"><svg class="chev" viewBox="0 0 9 6"><path d="M1 .5l3 2.500-3 2.500M5 .5l3 2.500-3 2.500" /></svg><i class="caret"></i></button>
      </div>
      <div class="toolbar model">
        <span class="grip"></span>
        <button class="tool" aria-label="工件"><svg class="icon"><use href="#stand" /></svg></button>
        <button class="tool" aria-label="测量"><svg class="icon"><use href="#measure" /></svg></button>
        <button class="tool" aria-label="包容体"><svg class="icon"><use href="#bbox" /></svg></button>
        <button class="tool" aria-label="曲线"><svg class="icon"><use href="#curve" /></svg></button>
        <button class="tool" aria-label="曲面"><svg class="icon"><use href="#surface" /></svg></button>
        <button class="tool" aria-label="对象信息"><svg class="icon"><use href="#infobox" /></svg></button>
        <button class="tool" aria-label="实体"><svg class="icon"><use href="#redcube" /></svg></button>
        <button class="tool" aria-label="中心"><svg class="icon"><use href="#pink" /></svg></button>
        <button class="tool" aria-label="文字"><svg class="icon"><use href="#textart" /></svg></button>
        <button class="more" aria-label="更多"><i class="caret"></i></button>
      </div>
      <div class="toolbar output">
        <span class="grip"></span>
        <button class="tool" aria-label="记事本"><svg class="icon"><use href="#notebook" /></svg></button>
        <button class="tool gap" aria-label="车削"><svg class="icon"><use href="#lathe" /></svg></button>
        <button class="tool" aria-label="机床"><svg class="icon"><use href="#robot" /></svg></button>
        <button class="tool gap" aria-label="添加文档"><svg class="icon"><use href="#docadd" /></svg></button>
        <button class="tool" aria-label="编辑文档"><svg class="icon"><use href="#dochand" /></svg></button>
        <button class="tool" aria-label="车间文档"><svg class="icon"><use href="#docstack" /></svg></button>
        <button class="tool" aria-label="刀轨"><svg class="icon"><use href="#coil" /></svg></button>
        <button class="more" aria-label="更多"><svg class="chev" viewBox="0 0 9 6"><path d="M1 .5l3 2.500-3 2.500M5 .5l3 2.500-3 2.500" /></svg><i class="caret"></i></button>
      </div>
      <div class="toolbar last">
        <span class="grip"></span>
        <button class="tool" aria-label="线框"><svg class="icon"><use href="#wirecube" /></svg></button>
        <button class="tool" aria-label="展开"><svg class="icon"><use href="#yellowmap" /></svg></button>
      </div>
    </div>

    <div class="selection">
      <select class="type-filter" aria-label="类型过滤器"><option>无选择过滤器</option></select>
      <select class="scope" aria-label="选择范围"><option>整个装配</option></select>
      <button class="small" aria-label="装配"><svg><use href="#s-asm" /></svg></button>
      <button class="small" aria-label="过滤"><svg><use href="#s-fil" /></svg></button>
      <button class="small tight" aria-label="常规选择过滤器"><svg><use href="#s-red" /></svg></button>
      <button class="drop" aria-label="过滤器列表"><i class="caret"></i></button>
      <button class="small" aria-label="旋转点"><svg><use href="#s-rot" /></svg></button>
      <button class="small" aria-label="恢复"><svg><use href="#s-arr" /></svg></button>
      <button class="small" aria-label="多边形"><svg><use href="#s-hex" /></svg></button>
      <button class="small" aria-label="添加体"><svg><use href="#s-box" /></svg></button>
      <button class="small" aria-label="矩形"><svg><use href="#s-rect" /></svg></button>
      <button class="drop" aria-label="矩形列表"><i class="caret"></i></button>
      <button class="small gap" aria-label="视图"><svg><use href="#s-view" /></svg></button>
      <button class="small" aria-label="着色"><svg><use href="#s-shade" /></svg></button>
    </div>

    <main class="workspace">
      <div class="resources">
        <div class="res-top">
          <button class="gearbtn" aria-label="设置"><svg><use href="#gear" /></svg></button>
          <button class="res" aria-label="装配导航器"><svg class="icon"><use href="#r-asm" /></svg></button>
          <button class="res" aria-label="约束导航器"><svg class="icon"><use href="#r-con" /></svg></button>
          <button class="res" aria-label="部件导航器"><svg class="icon"><use href="#r-part" /></svg></button>
        </div>
        <button class="res active" aria-label="工序导航器"><svg class="icon"><use href="#r-op" /></svg></button>
        <div class="res-rest">
          <button class="res" aria-label="加工特征"><svg class="icon"><use href="#r-mach" /></svg></button>
          <button class="res" aria-label="机床导航器"><svg class="icon"><use href="#r-sim" /></svg></button>
          <button class="res" aria-label="重用库"><svg class="icon"><use href="#r-books" /></svg></button>
          <button class="res apart" aria-label="HD3D 工具"><svg class="icon"><use href="#r-web" /></svg></button>
          <button class="res apart" aria-label="浏览器"><svg class="icon"><use href="#r-page" /></svg></button>
          <button class="res apart" aria-label="历史记录"><svg class="icon"><use href="#r-clock" /></svg></button>
          <button class="res" aria-label="系统材料"><svg class="icon"><use href="#r-color" /></svg></button>
          <button class="res" aria-label="加工向导"><svg class="icon"><use href="#r-dwand" /></svg></button>
          <button class="res" aria-label="角色"><svg class="icon"><use href="#r-fix" /></svg></button>
          <button class="res" aria-label="机床库"><svg class="icon"><use href="#r-mfold" /></svg></button>
        </div>
      </div>

      <section class="navigator">
        <div class="nav-title">
          <h2>工序导航器 - 程序顺序</h2>
          <button class="maximize" aria-label="最大化"></button>
        </div>
        <div class="table-wrap">
          <table>
            <colgroup><col class="c-name"><col class="c-tool"><col class="c-time"><col class="c-stock"><col></colgroup>
            <thead>
              <tr><th>名称</th><th>刀具</th><th>时间</th><th>余量</th><th>底面余量</th></tr>
            </thead>
            <tbody id="rows">
              <tr><td>NC_PROGRAM</td><td></td><td>00:00:00</td><td></td><td></td></tr>
              <tr>
                <td><div class="node"><svg class="branch" viewBox="0 0 17 20"><path d="M16 10.500H6.500V20" /></svg><svg class="folder"><use href="#folder3" /></svg>未用项</div></td>
                <td></td><td>00:00:00</td><td></td><td></td>
              </tr>
              <tr>
                <td><div class="node"><svg class="branch" viewBox="0 0 17 20"><path d="M6.500 0v10.500H16" /></svg><svg class="check" viewBox="0 0 12 12"><path d="M1 6l3 4.500L11 1" /></svg><svg class="folder"><use href="#folder3" /></svg>PROGRAM</div></td>
                <td></td><td>00:00:00</td><td></td><td></td>
              </tr>
            </tbody>
          </table>
        </div>
        <div class="scrollbar">
          <button aria-label="向左滚动"><svg viewBox="0 0 6 8"><path d="M5 0L1 4l4 4" /></svg></button>
          <span class="thumb"></span>
          <button aria-label="向右滚动"><svg viewBox="0 0 6 8"><path d="M1 0l4 4-4 4" /></svg></button>
        </div>
        <div class="splitter"></div>
        <button class="section">相关性<svg viewBox="0 0 12 10"><path d="M1 0l5 8 5-8" /></svg></button>
        <button class="section">细节<svg viewBox="0 0 12 10"><path d="M1 0l5 8 5-8" /></svg></button>
      </section>

      <div class="palettes">
        <div class="palette">
          <span class="hgrip"></span>
          <button class="tool" aria-label="创建程序"><svg class="icon"><use href="#v-prog" /></svg></button>
          <button class="tool" aria-label="创建刀具"><svg class="icon"><use href="#v-tool" /></svg></button>
          <button class="tool" aria-label="创建几何体"><svg class="icon"><use href="#v-geo" /></svg></button>
          <button class="tool" aria-label="创建工序"><svg class="icon"><use href="#v-opn" /></svg></button>
          <button class="fold" aria-label="选项"><i></i></button>
        </div>
        <div class="palette">
          <span class="hgrip"></span>
          <button class="tool on" aria-label="程序顺序视图"><svg class="icon"><use href="#v-prog2" /></svg></button>
          <button class="tool" aria-label="机床视图"><svg class="icon"><use href="#v-tool2" /></svg></button>
          <button class="tool" aria-label="几何视图"><svg class="icon"><use href="#v-geo2" /></svg></button>
          <button class="tool" aria-label="加工方法视图"><svg class="icon"><use href="#v-meth" /></svg></button>
          <button class="fold" aria-label="选项"><i></i></button>
        </div>
        <div class="palette ops">
          <span class="hgrip"></span>
          <button class="tool" aria-label="生成刀轨"><svg class="icon"><use href="#v-gen" /></svg></button>
          <button class="tool" aria-label="确认刀轨"><svg class="icon"><use href="#v-ver" /></svg></button>
          <button class="tool" aria-label="后处理"><svg class="icon"><use href="#v-post" /></svg></button>
          <button class="tool" aria-label="机床仿真"><svg class="icon"><use href="#v-mach" /></svg></button>
          <button class="tool" aria-label="车间文档"><svg class="icon"><use href="#v-shop" /></svg></button>
          <button class="fold" aria-label="选项"><i></i></button>
        </div>
      </div>

      <section class="graphics">
        <div class="tabs">
          <div class="tab">
            <svg class="tabicon"><use href="#drill" /></svg>
            <a href="#">_model2.prt</a>
            <svg class="modified" viewBox="0 0 10 12"><path d="M5 1.500H1v9h6V8M3 .5h3v2H3zM6 3l3 2-3 3" /></svg>
            <button aria-label="关闭"><svg viewBox="0 0 9 9"><path d="M1 1l7 7M8 1L1 8" /></svg></button>
          </div>
        </div>
        <div class="canvas">
          <!-- WCS and MCS axes -->
          <svg class="csys" viewBox="0 0 510 630">
            <g fill="none" stroke="#0000f0" stroke-width="4">
              <path d="M98 270l156-47v186l127 59-156 47V328z" />
              <path d="M97 170V120M75 456h44M96 440v37M300 550l25 8M335 385l40-12" />
            </g>
            <path d="M97 456V210" stroke="#0038c8" stroke-width="8" />
            <path d="M97 168l12 58H86z" fill="#0846e0" />
            <path d="M97 84l10 48H87z" fill="#0000d0" />
            <path d="M100 456l200-60" stroke="#2c9030" stroke-width="6" />
            <path d="M342 383l-56 8 6 18z" fill="#44b444" />
            <path d="M100 458l160 74" stroke="#c83030" stroke-width="6" />
            <path d="M297 549l-42-30-10 16z" fill="#e83c3c" />
            <path d="M350 574l-28-25-9 16zM408 363l-40 3 4 16z" fill="#0000e0" />
            <circle cx="101" cy="456" r="5" fill="#ddd" />
            <g font-size="40">
              <text x="84" y="81" fill="#0000ff">Z</text>
              <text x="109" y="164" fill="#0a48f0">ZM</text>
              <text x="286" y="372" fill="#389c38">YM</text>
              <text x="410" y="371" fill="#0000ff">Y</text>
              <text x="243" y="589" fill="#e03838">XM</text>
              <text x="349" y="592" fill="#0000ff">X</text>
            </g>
          </svg>
          <!-- view triad -->
          <svg class="triad" viewBox="0 0 360 300">
            <path d="M118 133l57-21 55 24v79l-55 18-57-25z" fill="#999" />
            <path d="M118 133l57-21 55 24-65 20z" fill="#a6a6a6" />
            <path d="M118 133l57-21 55 24v79l-55 18-10-4v-73zM165 156l65-20M175 112v83l55 20M175 195l-57 12" fill="none" stroke="#c4c4c4" stroke-width="3" />
            <path d="M112 205l85-24" stroke="#a0cca0" stroke-width="8" />
            <path d="M222 175l-30-1 5 20z" fill="#a0cca0" />
            <path d="M112 205v-95" stroke="#0838d8" stroke-width="9" />
            <path d="M112 78l11 35h-21z" fill="#0838d8" />
            <path d="M114 210l70 30" stroke="#d02828" stroke-width="9" />
            <path d="M205 250l-28-20-8 17z" fill="#e02c2c" />
            <circle cx="111" cy="209" r="11" fill="#e4e4e4" />
            <g font-size="36">
              <text x="101" y="77" fill="#0a3ce8">Z</text>
              <text x="221" y="184" fill="#1c901c">Y</text>
              <text x="198" y="266" fill="#d82c2c">X</text>
            </g>
          </svg>
          <p class="watermark">UG<span>爱好者论坛</span> WWW.UGSNX.COM</p>
        </div>
      </section>
    </main>

    <svg class="pointer" viewBox="0 0 142 273" aria-hidden="true"><path d="M1 0l35 22-9 5 115 246L8 37l-8 6z" /></svg>

    <script>
      // fill the rest of the navigator with empty rows
      const rows = document.getElementById("rows");
      for (let i = 0; i < 60; i++) {
        const row = rows.insertRow();
        for (let c = 0; c < 5; c++) row.insertCell();
      }
    </script>
  </body>
</html>
```

FILE: styles.css
```css
* {
  box-sizing: border-box;
}

body {
  font-family: "Noto Sans", "Noto Sans CJK SC", sans-serif;
  font-size: 12px;
  color: #e8802c;
  background-color: #1e1e1e;
  margin: 0;
  height: 100vh;
  display: flex;
  flex-direction: column;
  overflow: hidden;
}

button {
  background: none;
  border: none;
  padding: 0;
  margin: 0;
  font: inherit;
  color: inherit;
  cursor: pointer;
}

a {
  color: inherit;
  text-decoration: none;
}

h1,
h2,
p {
  margin: 0;
  font-size: 12px;
  font-weight: normal;
}

svg {
  display: block;
}

.sprite {
  position: absolute;
  width: 0;
  height: 0;
}

.icon {
  width: 24px;
  height: 24px;
  flex: none;
}

.caret {
  width: 0;
  height: 0;
  border: 3px solid transparent;
  border-top-color: #e8802c;
  border-bottom: 0;
}

.grip {
  width: 2px;
  height: 26px;
  margin-right: 2px;
  flex: none;
  background: repeating-linear-gradient(#e8802c 0 2px, transparent 2px 4px);
}

.gap {
  margin-left: 6px;
}

.gap-s {
  margin-left: 4px;
}

/* title and menus */
.titlebar {
  height: 19px;
  flex: none;
  display: flex;
  align-items: center;
  gap: 12px;
  padding: 0 0 7px 1px;
}

.titlebar h1 {
  font-size: 13px;
  line-height: 14px;
}

.logo {
  font-family: "Liberation Sans", sans-serif;
  font-size: 22px;
  line-height: 22px;
  font-weight: bold;
  color: #8796a3;
}

.menubar {
  height: 27px;
  flex: none;
  display: flex;
  align-items: center;
  gap: 14px;
  padding-bottom: 2px;
  font-size: 11px;
  line-height: 16px;
  white-space: nowrap;
  background-color: #549fb8;
}

.menubar .grip {
  height: 18px;
  margin-right: -6px;
  background: repeating-linear-gradient(#222 0 2px, #e8802c 2px 4px);
}

/* toolbars */
.toolbars {
  height: 34px;
  flex: none;
  display: flex;
  border-bottom: 1px solid #e6e6e6;
}

.toolbar {
  display: flex;
  align-items: center;
  flex: none;
  padding-left: 3px;
  border-left: 1px solid #e6e6e6;
}

.standard {
  width: 581px;
  padding-left: 0;
  border-left: none;
}

.nc {
  width: 485px;
}

.model {
  width: 301px;
}

.output {
  width: 266px;
}

.last {
  flex: 1;
  overflow: hidden;
}

.start {
  width: 65px;
  display: flex;
  align-items: center;
  font-size: 11px;
  padding-left: 4px;
  gap: 4px;
}

.tool {
  width: 31px;
  height: 31px;
  flex: none;
  display: flex;
  align-items: center;
  justify-content: center;
}

.drop {
  width: 13px;
  height: 24px;
  display: flex;
  align-items: center;
  justify-content: center;
}

.more {
  height: 20px;
  margin-left: auto;
  margin-right: 3px;
  display: flex;
  flex-direction: column;
  align-items: center;
  justify-content: space-between;
}

.more .caret:only-child {
  margin-top: auto;
}

.chev {
  width: 9px;
  height: 6px;
  fill: none;
  stroke: #e8802c;
  stroke-width: 1.4;
}

.selection {
  height: 32px;
  flex: none;
  display: flex;
  align-items: center;
  padding-left: 2px;
  border-bottom: 1px solid #8a8f90;
}

.selection select {
  appearance: none;
  height: 20px;
  padding: 0 2px;
  margin-right: 7px;
  font: inherit;
  font-size: 11px;
  color: #e8802c;
  border: 1px solid #b0b0b0;
  border-radius: 0;
  background: linear-gradient(45deg, transparent 50%, #e8802c 50%) right 9px center / 4px 4px no-repeat,
    linear-gradient(-45deg, transparent 50%, #e8802c 50%) right 5px center / 4px 4px no-repeat, #000;
}

.selection .type-filter {
  width: 133px;
}

.selection .scope {
  width: 140px;
}

.small {
  width: 24px;
  height: 24px;
  display: flex;
  align-items: center;
  justify-content: center;
}

.small svg {
  width: 16px;
  height: 16px;
}

.small.tight {
  width: 20px;
}

.selection .drop {
  width: 12px;
}

/* main area */
.workspace {
  flex: 1;
  min-height: 0;
  display: flex;
}

.resources {
  width: 29px;
  flex: none;
  display: flex;
  flex-direction: column;
}

.res-top {
  height: 167px;
  flex: none;
  border-right: 1px solid #a8a8a8;
  border-bottom: 1px solid #d8d8d8;
}

.res-rest {
  flex: 1;
  border-top: 1px solid #d8d8d8;
  border-right: 1px solid #a8a8a8;
}

.gearbtn {
  width: 24px;
  height: 25px;
  margin-bottom: 16px;
  display: flex;
  align-items: center;
  justify-content: center;
}

.gearbtn svg {
  width: 15px;
  height: 15px;
}

.res {
  width: 28px;
  height: 42px;
  flex: none;
  display: flex;
  align-items: center;
  justify-content: center;
  padding-right: 1px;
}

.res-rest .res:first-child {
  height: 40px;
}

.res.active {
  height: 44px;
}

.res.apart {
  margin-top: 12px;
}

.navigator {
  width: 565px;
  flex: none;
  display: flex;
  flex-direction: column;
  padding: 0 9px 0 6px;
  border-right: 1px solid #7f8a8c;
}

.nav-title {
  height: 30px;
  flex: none;
  display: flex;
  align-items: center;
  justify-content: space-between;
  padding: 0 7px 0 4px;
}

.maximize {
  width: 12px;
  height: 11px;
  border: 1px solid #e8802c;
  border-top-width: 2px;
}

.table-wrap {
  flex: 1;
  min-height: 0;
  margin: 0 2px;
  overflow: hidden;
}

table {
  width: 100%;
  table-layout: fixed;
  border-collapse: separate;
  border-spacing: 0;
}

.c-name {
  width: 200px;
}

.c-tool {
  width: 100px;
}

.c-time {
  width: 94px;
}

.c-stock {
  width: 62px;
}

th {
  height: 21px;
  padding: 2px 6px 0;
  font-weight: normal;
  line-height: 18px;
  text-align: left;
  border-right: 1px solid #e0e0e0;
  border-bottom: 1px solid #e0e0e0;
}

td {
  height: 20px;
  padding: 0 3px;
  line-height: 19px;
  border-right: 1px solid #000;
  border-bottom: 1px solid #0a0a0a;
}

th:last-child,
td:last-child {
  border-right: none;
}

.node {
  height: 19px;
  display: flex;
  align-items: center;
}

.branch {
  width: 17px;
  height: 20px;
  fill: none;
  stroke: #eee;
}

.folder {
  width: 14px;
  height: 13px;
  margin-right: 4px;
}

.check {
  width: 12px;
  height: 12px;
  margin-right: 4px;
  fill: none;
  stroke: #18c830;
  stroke-width: 3;
}

.scrollbar {
  height: 17px;
  flex: none;
  margin: 0 2px 2px;
  display: flex;
  background-color: #f0f0f0;
}

.scrollbar button {
  width: 17px;
  display: flex;
  align-items: center;
  justify-content: center;
}

.scrollbar svg {
  width: 6px;
  height: 8px;
  fill: none;
  stroke: #444;
  stroke-width: 2;
}

.thumb {
  flex: 1;
  margin: 1px 11px 1px 0;
  background-color: #cdcdcd;
}

.splitter {
  height: 5px;
  flex: none;
  border: 1px solid #b0b0b0;
}

.section {
  height: 24px;
  flex: none;
  display: flex;
  align-items: center;
  justify-content: space-between;
  padding: 2px 6px 0 7px;
  font-size: 14px;
  line-height: 20px;
  color: #0b6385;
  border-bottom: 2px solid #d0d4d4;
}

.section:last-child {
  height: 21px;
  border-bottom: none;
}

.section svg {
  width: 12px;
  height: 10px;
  fill: none;
  stroke: #0b6385;
  stroke-width: 3;
}

/* vertical palettes */
.palettes {
  width: 35px;
  flex: none;
  border-right: 1px solid #b0b4b4;
}

.palette {
  display: flex;
  flex-direction: column;
  align-items: center;
  padding-top: 3px;
  border-right: 1px solid #e6e6e6;
  border-bottom: 1px solid #e6e6e6;
}

.palette:first-child {
  padding-top: 6px;
}

.palette.ops {
  margin-top: 14px;
  padding-bottom: 6px;
}

.hgrip {
  width: 26px;
  height: 2px;
  margin-bottom: 3px;
  background: repeating-linear-gradient(90deg, #e8802c 0 2px, transparent 2px 4px);
}

.on {
  background-color: #cfe6ec;
  border: 1px solid #a8d0dc;
}

.fold {
  width: 19px;
  height: 13px;
  align-self: flex-start;
  display: flex;
  align-items: center;
  justify-content: center;
}

.fold i {
  border: 3px solid transparent;
  border-left: 0;
  border-right-color: #e8802c;
}

/* graphics window */
.graphics {
  flex: 1;
  min-width: 0;
  display: flex;
  flex-direction: column;
}

.tabs {
  height: 23px;
  flex: none;
  display: flex;
  border-bottom: 2px solid #549fb8;
}

.tab {
  display: flex;
  align-items: center;
  padding: 0 6px 0 5px;
  color: #000;
  font-size: 12px;
  background-color: #549fb8;
}

.tabicon {
  width: 17px;
  height: 16px;
  margin-right: 4px;
}

.modified {
  width: 10px;
  height: 12px;
  margin: 0 6px;
  fill: none;
  stroke: #000;
}

.tab button svg {
  width: 9px;
  height: 9px;
  stroke: #000;
  stroke-width: 2;
}

.canvas {
  flex: 1;
  position: relative;
  background-color: #000;
}

.canvas text {
  font-family: "Liberation Sans", sans-serif;
}

.csys {
  position: absolute;
  left: 611px;
  top: 285px;
  width: 170px;
  height: 210px;
}

.triad {
  position: absolute;
  left: 31px;
  bottom: 32px;
  width: 120px;
  height: 100px;
}

.watermark {
  position: absolute;
  right: 5px;
  bottom: 2px;
  font-family: "Liberation Mono", "Noto Sans CJK SC", monospace;
  font-size: 13px;
  line-height: 20px;
  color: #d8d8d8;
}

.watermark span {
  font-size: 16px;
}

.pointer {
  position: absolute;
  left: 887px;
  top: 30px;
  width: 142px;
  height: 273px;
  fill: #fc3a3a;
}
```
